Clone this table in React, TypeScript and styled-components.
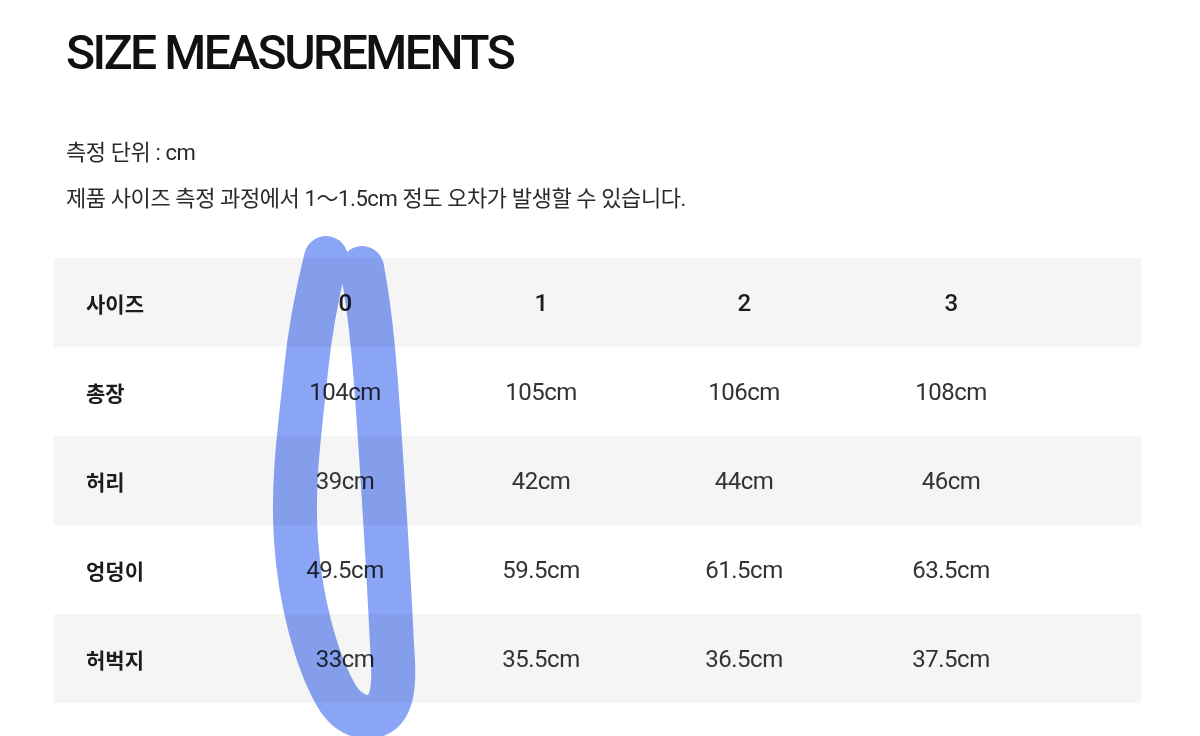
import React from 'react';
import styled, { createGlobalStyle } from 'styled-components';

const GlobalStyle = createGlobalStyle`
  html, body {
    margin: 0;
    padding: 0;
    background: #fff;
  }
  body {
    font-family: Roboto, "Noto Sans CJK KR", sans-serif;
    color: #222;
  }
`

const Page = styled.div`
  position: relative;
  width: 1200px;
  height: 736px;
  overflow: hidden;
  box-sizing: border-box;
  padding: 29px 0 0 54px;
`

const Title = styled.h1`
  margin: 0 0 0 12px;
  font-family: Roboto, "Noto Sans CJK KR", sans-serif;
  font-size: 48px;
  line-height: 48px;
  font-weight: 500;
  letter-spacing: -2.5px;
  color: #111;
`

const Notes = styled.div`
  margin: 53px 0 0 12px;
  font-family: Roboto, "Noto Sans CJK KR", sans-serif;
  font-size: 22px;
  line-height: 46px;
  letter-spacing: -0.4px;
  color: #2a2a2a;

  p {
    margin: 0;
  }
`

const Table = styled.div`
  margin-top: 36px;
  width: 1087px;
  display: flex;
  flex-direction: column;
`

const Row = styled.div<{ $shaded: boolean }>`
  display: grid;
  grid-template-columns: 190px 202px 190px 216px 198px 1fr;
  align-items: center;
  height: 89px;
  background: ${p => (p.$shaded ? '#f5f5f5' : '#fff')};
`

const Label = styled.div`
  padding-left: 32px;
  font-family: Roboto, "Noto Sans CJK KR", sans-serif;
  font-size: 21px;
  font-weight: 700;
  color: #1c1c1c;
`

const Cell = styled.div<{ $head?: boolean }>`
  text-align: center;
  font-family: Roboto, "Noto Sans CJK KR", sans-serif;
  font-size: 24px;
  font-weight: ${p => (p.$head ? 500 : 400)};
  letter-spacing: -0.5px;
  color: ${p => (p.$head ? '#1c1c1c' : '#333')};
`

const Scribble = styled.svg`
  position: absolute;
  left: 0;
  top: 0;
  pointer-events: none;
  mix-blend-mode: multiply;
`

const sizes = ['0', '1', '2', '3']

const rows = [
  { label: '총장', values: ['104cm', '105cm', '106cm', '108cm'] },
  { label: '허리', values: ['39cm', '42cm', '44cm', '46cm'] },
  { label: '엉덩이', values: ['49.5cm', '59.5cm', '61.5cm', '63.5cm'] },
  { label: '허벅지', values: ['33cm', '35.5cm', '36.5cm', '37.5cm'] },
]

function App() {
  return (
    <>
      <GlobalStyle />
      <Page>
        <Title>SIZE MEASUREMENTS</Title>
        <Notes>
          <p>측정 단위 : cm</p>
          <p>제품 사이즈 측정 과정에서 1～1.5cm 정도 오차가 발생할 수 있습니다.</p>
        </Notes>

        <Table>
          <Row $shaded>
            <Label>사이즈</Label>
            {sizes.map(s => (
              <Cell key={s} $head>{s}</Cell>
            ))}
            <div />
          </Row>
          {rows.map((r, i) => (
            <Row key={r.label} $shaded={i % 2 === 1}>
              <Label>{r.label}</Label>
              {r.values.map(v => (
                <Cell key={v}>{v}</Cell>
              ))}
              <div />
            </Row>
          ))}
        </Table>

        {/* hand-drawn highlight over the "0" column */}
        <Scribble width="1200" height="736" viewBox="0 0 1200 736">
          <path
            d="M 326 258 C 318 290 310 330 306 370 C 300 430 292 480 296 540 C 300 600 316 660 336 695 C 348 716 370 724 384 710 C 395 698 394 672 392 645 C 389 580 384 500 380 440 C 376 380 372 320 362 268"
            fill="none"
            stroke="#8aa5f6"
            strokeWidth="44"
            strokeLinecap="round"
            strokeLinejoin="round"
          />
        </Scribble>
      </Page>
    </>
  )
}

export default App;
